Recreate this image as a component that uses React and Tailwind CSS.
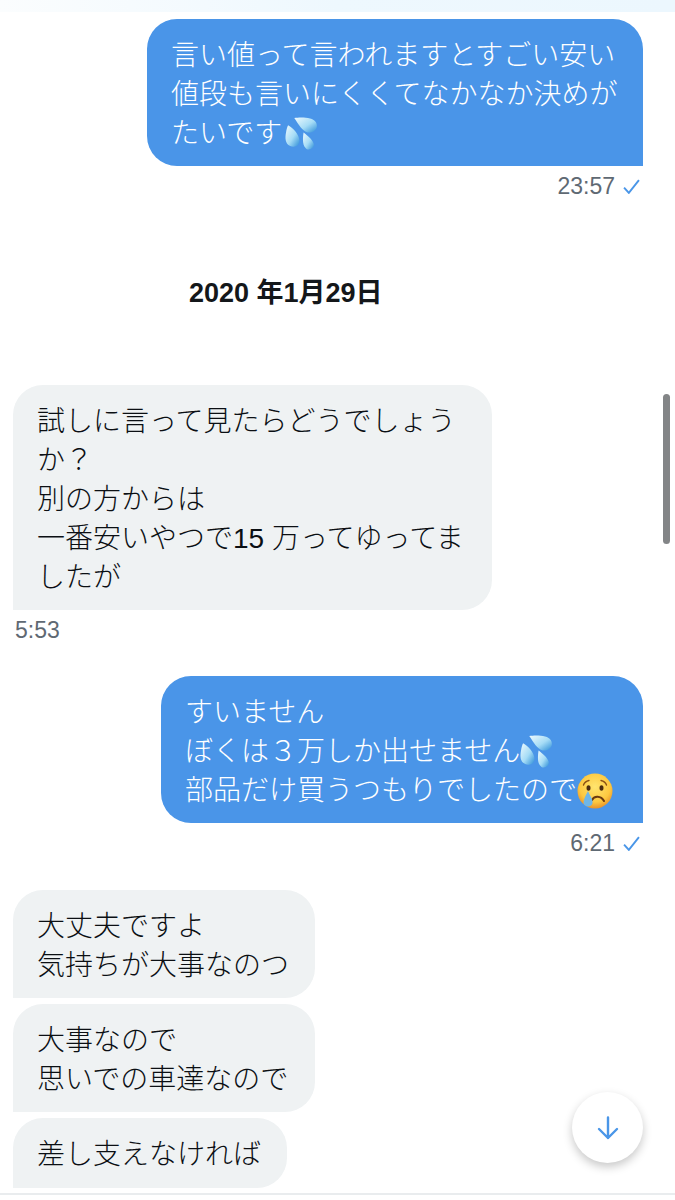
import React from 'react';

const FONT = 'font-["Liberation_Sans","Noto_Sans_CJK_JP",sans-serif]';

function SweatDrops({ className }) {
  return (
    <svg viewBox="0 0 32 32" className={className}>
      <defs>
        <linearGradient id="drop" x1="0" y1="0" x2="1" y2="1">
          <stop offset="0" stopColor="#eefafe" />
          <stop offset="0.55" stopColor="#a5dcf6" />
          <stop offset="1" stopColor="#2f8fd8" />
        </linearGradient>
      </defs>
      <path d="M9 1 C15 0 27 0 30 5 C33 11 28 16 22 15 C17 14 13 7 9 1Z" fill="url(#drop)" />
      <path d="M3 8 C8 11 14 17 14 23 C14 28 9 30 5 28 C0 26 0 20 1 15 C1.500 12 2 10 3 8Z" fill="url(#drop)" />
      <path d="M18 15 C22 18 28 23 28 27 C28 31 22 33 20 30 C17 28 17 21 18 15Z" fill="url(#drop)" />
    </svg>
  );
}

function CryingFace({ className }) {
  return (
    <svg viewBox="0 0 36 36" className={className}>
      <defs>
        <radialGradient id="face" cx="0.5" cy="0.38" r="0.62">
          <stop offset="0" stopColor="#ffe56f" />
          <stop offset="0.7" stopColor="#fdc840" />
          <stop offset="1" stopColor="#e8922a" />
        </radialGradient>
      </defs>
      <circle cx="18" cy="18" r="17.500" fill="url(#face)" />
      <path d="M6.500 12 C7.500 9 9.500 8 12 7.500 M24 7.500 C26.500 8 28.500 9 29.500 12" fill="none" stroke="#8a4f14" strokeWidth="1.400" strokeLinecap="round" />
      <ellipse cx="11.500" cy="15" rx="2" ry="2.800" fill="#4b2c10" />
      <ellipse cx="24.500" cy="15" rx="2" ry="2.800" fill="#4b2c10" />
      <path d="M15 27 C17 22.500 24 22.500 27 28" fill="none" stroke="#6b3a10" strokeWidth="2" strokeLinecap="round" />
      <path d="M11 18 C13 23 16 26 15.500 30 C15 34.500 7 34.500 6.500 30 C6.500 26 9 22 11 18Z" fill="#6fb6e8" />
    </svg>
  );
}

function Check() {
  return (
    <svg viewBox="0 0 16 14" className="w-[17px] h-[15px]" fill="none" stroke="#4a96e8" strokeWidth="1.800">
      <path d="M1 8 L5.500 13 L15 1" />
    </svg>
  );
}

function Bubble({ mine, lines, className }) {
  const shape = mine
    ? 'bg-[#4a95e8] text-white rounded-[30px] rounded-br-none'
    : 'bg-[#eff2f3] text-[#0b0f13] rounded-[30px] rounded-bl-none';
  return (
    <div className={`${shape} pt-[17px] pb-[13px] pl-[24px] text-[28px] font-light leading-[39px] whitespace-nowrap ${className}`}>
      {lines.map((line, i) => (
        <div key={i} className="flex items-center h-[39px]">{line}</div>
      ))}
    </div>
  );
}

function Time({ text, mine }) {
  return (
    <div className={`flex items-center h-[40px] text-[23px] text-[#5f6973] ${mine ? 'justify-end gap-[8px] pr-[3px]' : 'pl-[2px]'}`}>
      <span>{text}</span>
      {mine && <Check />}
    </div>
  );
}

export default function App() {
  return (
    <div className={`${FONT} relative h-[1200px] w-[675px] overflow-hidden bg-white`}>
      <div className="h-[12px] bg-gradient-to-r from-[#fbfdfe] via-[#eef8fe] to-[#ecf7fe]" />

      <div className="flex flex-col pr-[32px] pl-[13px] pt-[7px]">
        <div className="flex justify-end">
          <Bubble
            mine
            className="w-[496px]"
            lines={[
              '言い値って言われますとすごい安い',
              '値段も言いにくくてなかなか決めが',
              <>たいです<SweatDrops className="w-[33px] h-[33px] ml-[3px]" /></>,
            ]}
          />
        </div>
        <Time mine text="23:57" />

        <div className="pl-[176px] mt-[67px] mb-[72px] h-[40px] flex items-center text-[27px] font-bold text-[#14171a]">
          2020 年1月29日
        </div>

        <div className="flex">
          <Bubble
            className="w-[479px]"
            lines={[
              '試しに言って見たらどうでしょう',
              'か？',
              '別の方からは',
              '一番安いやつで15 万ってゆってま',
              'したが',
            ]}
          />
        </div>
        <Time text="5:53" />

        <div className="flex justify-end mt-[26px]">
          <Bubble
            mine
            className="w-[482px]"
            lines={[
              'すいません',
              <>ぼくは３万しか出せません<SweatDrops className="w-[33px] h-[33px]" /></>,
              <>部品だけ買うつもりでしたので<CryingFace className="w-[36px] h-[36px]" /></>,
            ]}
          />
        </div>
        <Time mine text="6:21" />

        <div className="flex flex-col items-start gap-[6px] mt-[27px]">
          <Bubble className="w-[302px]" lines={['大丈夫ですよ', '気持ちが大事なのつ']} />
          <Bubble className="w-[302px]" lines={['大事なので', '思いでの車達なので']} />
          <Bubble className="w-[274px] h-[70px]" lines={['差し支えなければ']} />
        </div>
      </div>

      <div className="absolute left-0 right-0 top-[1193px] h-[2px] bg-[#e9ecee]" />
      <div className="absolute left-[663px] top-[394px] w-[7px] h-[150px] rounded-full bg-[#838587]" />

      <div className="absolute left-[572px] top-[1092px] w-[71px] h-[71px] rounded-full bg-white shadow-[0_4px_10px_rgba(0,0,0,0.22)] flex items-center justify-center">
        <svg viewBox="0 0 24 24" className="w-[24px] h-[24px]" fill="none" stroke="#4a96e8" strokeWidth="2.400" strokeLinecap="round" strokeLinejoin="round">
          <path d="M12 1.500 V22 M3 13 L12 22 L21 13" />
        </svg>
      </div>
    </div>
  );
}
